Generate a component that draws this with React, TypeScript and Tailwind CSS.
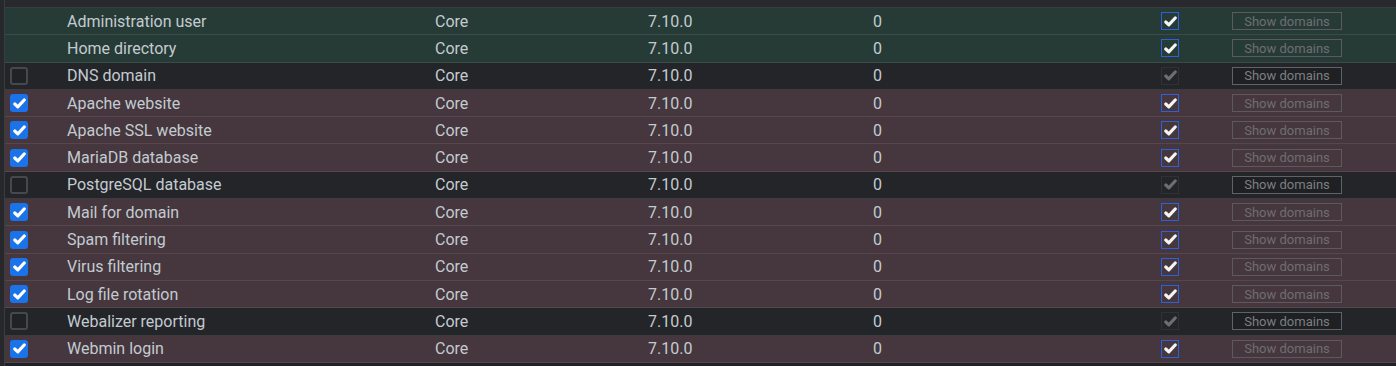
import React from 'react';

type Row = {
  name: string;
  kind: 'fixed' | 'on' | 'off';
};

const rows: Row[] = [
  { name: 'Administration user', kind: 'fixed' },
  { name: 'Home directory', kind: 'fixed' },
  { name: 'DNS domain', kind: 'off' },
  { name: 'Apache website', kind: 'on' },
  { name: 'Apache SSL website', kind: 'on' },
  { name: 'MariaDB database', kind: 'on' },
  { name: 'PostgreSQL database', kind: 'off' },
  { name: 'Mail for domain', kind: 'on' },
  { name: 'Spam filtering', kind: 'on' },
  { name: 'Virus filtering', kind: 'on' },
  { name: 'Log file rotation', kind: 'on' },
  { name: 'Webalizer reporting', kind: 'off' },
  { name: 'Webmin login', kind: 'on' },
];

function Tick({ color }: { color: string }) {
  return (
    <svg width="13" height="11" viewBox="0 0 13 11" className="block">
      <path d="M1.8 6 L4.8 8.8 L11.2 2" fill="none" stroke={color} strokeWidth="3.2" strokeLinecap="round" strokeLinejoin="round" />
    </svg>
  );
}

function LeftBox({ kind }: { kind: Row['kind'] }) {
  if (kind === 'fixed') return <div className="w-[18px] h-[18px]" />;
  if (kind === 'off')
    return <div className="w-[18px] h-[18px] rounded-[3px] border-2 border-[#45484d] bg-[#202226]" />;
  return (
    <div className="w-[18px] h-[18px] rounded-[3px] bg-[#1a73e8] flex items-center justify-center">
      <Tick color="#ffffff" />
    </div>
  );
}

function RightBox({ kind }: { kind: Row['kind'] }) {
  if (kind === 'off')
    return (
      <div className="w-[18px] h-[18px] border border-[#2f3135] bg-[#232529] flex items-center justify-center">
        <Tick color="#6b6e72" />
      </div>
    );
  return (
    <div className="w-[18px] h-[18px] border-[1.5px] border-[#2b62d9] flex items-center justify-center">
      <Tick color="#f4f4f4" />
    </div>
  );
}

const rowBg: Record<Row['kind'], string> = {
  fixed: 'bg-[#263b36] border-[#3a4c47]',
  on: 'bg-[#45373d] border-[#56474d]',
  off: 'bg-[#232529] border-[#3b3c40]',
};

export default function App() {
  return (
    <div
      className="w-[1396px] h-[366px] bg-[#26282c] overflow-hidden text-[16px] text-[#c3cbd1]"
      style={{ fontFamily: 'Roboto, "Noto Sans", sans-serif' }}
    >
      <div className="ml-[4px] border-l border-[#3a3c40] h-full bg-[#202226]">
        <div className="h-[8px] bg-[#27292d] border-b border-[#3a3c40]" />
        {rows.map((r) => (
          <div key={r.name} className={`flex items-center h-[27.3px] border-b ${rowBg[r.kind]}`}>
            <div className="w-[62px] pl-[5px] flex items-center">
              <LeftBox kind={r.kind} />
            </div>
            <div className="w-[368px] whitespace-nowrap pt-[1px]">{r.name}</div>
            <div className="w-[213px] pt-[1px]">Core</div>
            <div className="w-[225px] pt-[1px]">7.10.0</div>
            <div className="w-[288px] pt-[1px]">0</div>
            <div className="w-[71px] flex">
              <RightBox kind={r.kind} />
            </div>
            <div
              className={`w-[110px] h-[18px] border flex items-center justify-center text-[13px] leading-none ${
                r.kind === 'off'
                  ? 'border-[#606266] bg-[#1e2023] text-[#7d7f82]'
                  : 'border-[#5d5a5c] text-[#6f6e70]'
              }`}
            >
              Show domains
            </div>
          </div>
        ))}
      </div>
    </div>
  );
}
